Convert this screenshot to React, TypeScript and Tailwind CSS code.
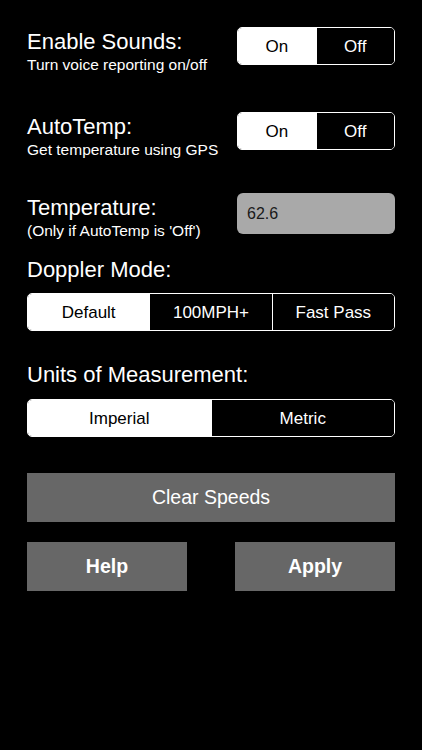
import React from "react";

function Segmented({ options, selected }: { options: string[]; selected: number }) {
  return (
    <div className="flex h-[38px] overflow-hidden rounded-[5px] border border-white">
      {options.map((opt, i) => (
        <div
          key={opt}
          className={
            (i === selected ? "bg-white text-black" : "bg-black text-white") +
            (i > 0 ? " border-l border-white" : "") +
            " flex flex-1 items-center justify-center pt-[1px] text-[17px]"
          }
        >
          {opt}
        </div>
      ))}
    </div>
  );
}

function Label({ title, sub }: { title: string; sub: string }) {
  return (
    <div className="pt-[2px]">
      <div className="text-[22px] leading-[26px] text-white">{title}</div>
      <div className="text-[15.5px] leading-[20px] text-white">{sub}</div>
    </div>
  );
}

export default function App() {
  return (
    <div
      className="h-[750px] w-[422px] bg-black px-[27px] pt-[27px]"
      style={{ fontFamily: '"Liberation Sans", Arial, sans-serif' }}
    >
      {/* Enable sounds */}
      <div className="flex items-start justify-between">
        <Label title="Enable Sounds:" sub="Turn voice reporting on/off" />
        <div className="w-[158px]">
          <Segmented options={["On", "Off"]} selected={0} />
        </div>
      </div>

      {/* AutoTemp */}
      <div className="mt-[37px] flex items-start justify-between">
        <Label title="AutoTemp:" sub="Get temperature using GPS" />
        <div className="w-[158px]">
          <Segmented options={["On", "Off"]} selected={0} />
        </div>
      </div>

      {/* Temperature */}
      <div className="mt-[33px] flex items-start justify-between">
        <Label title="Temperature:" sub="(Only if AutoTemp is 'Off')" />
        <div className="flex h-[41px] w-[158px] items-center rounded-[6px] bg-[#a9a9a9] px-[10px] text-[16px] text-[#1a1a1a]">
          62.6
        </div>
      </div>

      <div className="mt-[16px] text-[22px] leading-[26px] text-white">Doppler Mode:</div>
      <div className="mt-[10px]">
        <Segmented options={["Default", "100MPH+", "Fast Pass"]} selected={0} />
      </div>

      <div className="mt-[31px] text-[22px] leading-[26px] text-white">Units of Measurement:</div>
      <div className="mt-[11px]">
        <Segmented options={["Imperial", "Metric"]} selected={0} />
      </div>

      <button className="mt-[36px] flex h-[49px] w-full items-center justify-center bg-[#676767] text-[19.5px] text-white">
        Clear Speeds
      </button>

      <div className="mt-[20px] flex justify-between">
        <button className="flex h-[49px] w-[160px] items-center justify-center bg-[#676767] text-[19.5px] font-bold text-white">
          Help
        </button>
        <button className="flex h-[49px] w-[160px] items-center justify-center bg-[#676767] text-[19.5px] font-bold text-white">
          Apply
        </button>
      </div>
    </div>
  );
}
